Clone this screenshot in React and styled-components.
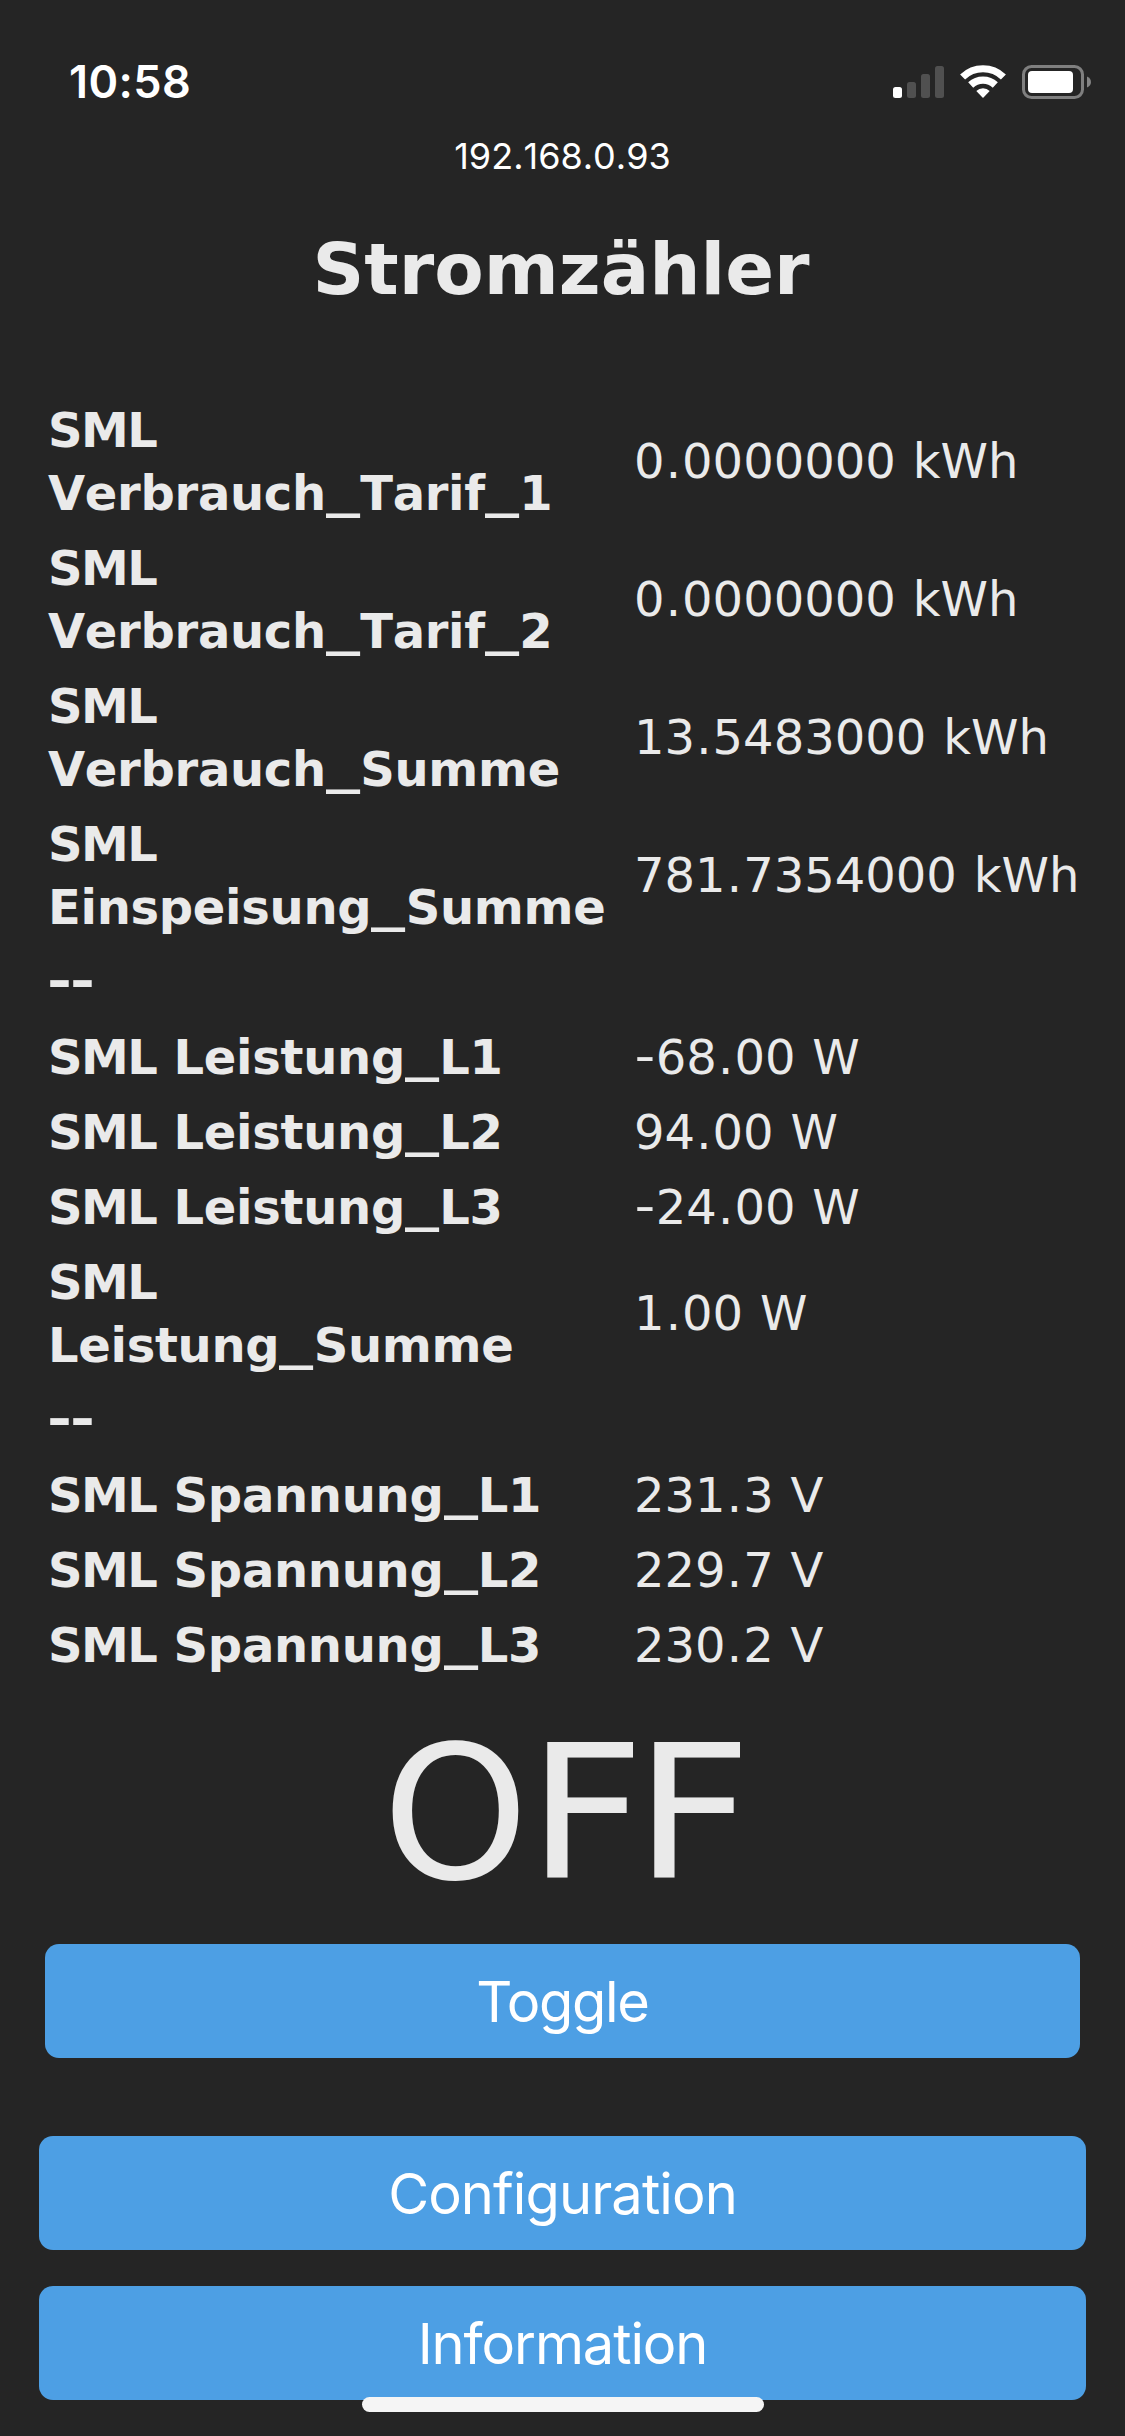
import { Fragment } from "react";
import styled, { createGlobalStyle } from "styled-components";

const GlobalStyle = createGlobalStyle`
  html,
  body {
    margin: 0;
    background: #252525;
  }

  * {
    box-sizing: border-box;
  }
`;

const Screen = styled.div`
  position: relative;
  width: 1125px;
  height: 2436px;
  overflow: hidden;
  background: #252525;
  color: #eaeaea;
  font-family: "DejaVu Sans", Verdana, sans-serif;
  font-size: 48px;
  font-kerning: none;
`;

const StatusBar = styled.header`
  display: flex;
  justify-content: space-between;
  align-items: center;
  height: 132px;
  padding: 32px 33px 0 69px;
  color: #fff;
`;

const Clock = styled.span`
  font-family: Inter, sans-serif;
  font-size: 45px;
  font-weight: 600;
  letter-spacing: 0.4px;
  line-height: 54px;
`;

const StatusIcons = styled.svg`
  display: block;
  width: 200px;
  height: 36px;
`;

const Address = styled.div`
  height: 92px;
  padding-top: 2px;
  color: #fff;
  font-family: Inter, sans-serif;
  font-size: 36px;
  line-height: 44px;
  text-align: center;
`;

const Title = styled.h2`
  height: 166px;
  margin: 0;
  padding-right: 3px;
  font-size: 72px;
  font-weight: bold;
  line-height: 90px;
  text-align: center;
`;

const ReadingTable = styled.table`
  width: 1047px;
  margin: 0 39px;
  border-spacing: 6px;
  table-layout: fixed;
  line-height: 63px;
`;

const Name = styled.th`
  width: 579px;
  padding: 3px;
  text-align: left;
  font-weight: bold;
  letter-spacing: -0.3px;
  word-spacing: 1px;
`;

const Value = styled.td`
  padding: 3px 3px ${({ $raised }) => ($raised ? 5 : 3)}px 4px;
  white-space: nowrap;
  word-spacing: 1.6px;
`;

const Prefix = styled.span`
  letter-spacing: -1.6px;
`;

// punctuation is set wider and higher than the font gives it
const Mark = styled.span`
  display: inline-block;
  width: ${({ $width }) => $width}px;
  letter-spacing: 0;
  text-align: center;
  transform: translateY(${({ $rise }) => -($rise || 0)}px)
    scaleX(${({ $stretch }) => $stretch || 1});
`;

const PowerState = styled.div`
  height: 258px;
  padding-top: 20px;
  font-size: 186px;
  line-height: 216px;
  text-align: center;
`;

const WideLetter = styled.span`
  display: inline-block;
  transform: scaleX(1.1);
  transform-origin: 18px 50%;
`;

const Actions = styled.div`
  display: flex;
  flex-direction: column;
  gap: ${({ $gap }) => $gap || 0}px;
  padding: 0 ${({ $inset }) => $inset}px;
  margin-bottom: 78px;
`;

const Button = styled.button`
  height: 114px;
  padding: 2px 0 0;
  border: 0;
  border-radius: 14px;
  background: #4d9fe4;
  color: #fff;
  font-family: Inter, sans-serif;
  font-size: 56px;
  font-weight: 400;
  font-kerning: normal;
  letter-spacing: ${({ $tracking }) => $tracking || 0}px;
  line-height: 112px;
  text-align: center;
  cursor: pointer;
`;

const HomeIndicator = styled.div`
  position: absolute;
  left: 362px;
  bottom: 24px;
  width: 402px;
  height: 15px;
  border-radius: 8px;
  background: #f5f5f5;
`;

const readings = [
  { name: "Verbrauch_Tarif_1", value: "0.0000000 kWh", wrap: true },
  { name: "Verbrauch_Tarif_2", value: "0.0000000 kWh", wrap: true },
  { name: "Verbrauch_Summe", value: "13.5483000 kWh", wrap: true },
  { name: "Einspeisung_Summe", value: "781.7354000 kWh", wrap: true },
  { separator: true },
  { name: "Leistung_L1", value: "-68.00 W" },
  { name: "Leistung_L2", value: "94.00 W" },
  { name: "Leistung_L3", value: "-24.00 W" },
  { name: "Leistung_Summe", value: "1.00 W", wrap: true },
  { separator: true },
  { name: "Spannung_L1", value: "231.3 V" },
  { name: "Spannung_L2", value: "229.7 V" },
  { name: "Spannung_L3", value: "230.2 V" },
];

const nameMarks = {
  _: { $width: 34.3, $stretch: 1.42, $rise: 3.5 },
  "-": { $width: 23, $stretch: 1.25, $rise: 2 },
};

const valueMarks = {
  ".": { $width: 17.5 },
  "-": { $width: 21.8, $stretch: 1.2, $rise: 2 },
};

const Spaced = ({ text, marks }) =>
  text
    .split(/([_.-])/)
    .filter(Boolean)
    .map((part, index) =>
      marks[part] ? (
        <Mark key={index} {...marks[part]}>{part}</Mark>
      ) : (
        <Fragment key={index}>{part}</Fragment>
      )
    );

const Reading = ({ reading }) => {
  if (reading.separator) {
    return (
      <tr>
        <Name><Spaced text="--" marks={nameMarks} /></Name>
        <Value />
      </tr>
    );
  }

  return (
    <tr>
      <Name>
        <Prefix>SML</Prefix>
        {reading.wrap ? <br /> : " "}
        <Spaced text={reading.name} marks={nameMarks} />
      </Name>
      <Value $raised={reading.wrap}>
        <Spaced text={reading.value} marks={valueMarks} />
      </Value>
    </tr>
  );
};

const Indicators = () => (
  <StatusIcons viewBox="0 0 200 36" fill="none">
    <rect x="1" y="23" width="9" height="11" rx="2.5" fill="#fff" />
    <g fill="#505050">
      <rect x="15" y="18" width="9" height="16" rx="2.5" />
      <rect x="29" y="10" width="9" height="24" rx="2.5" />
      <rect x="43" y="2" width="9" height="32" rx="2.5" />
    </g>
    <g stroke="#fff">
      <path d="M70.6 13A29.4 29.4 0 0 1 111.4 13" strokeWidth="7.2" />
      <path d="M78.7 21A18 18 0 0 1 103.3 21" strokeWidth="7.4" />
    </g>
    <path d="M91 34L84.3 27A9.8 9.8 0 0 1 97.7 27Z" fill="#fff" />
    <rect x="131.5" y="2.5" width="59" height="31" rx="8" stroke="#7f7f7f" strokeWidth="3" />
    <rect x="136" y="7" width="45" height="22" rx="4" fill="#fff" />
    <path d="M195 12.5C200.3 14.5 200.3 21.5 195 23.5Z" fill="#858585" />
  </StatusIcons>
);

const App = () => {
  return (
    <>
      <GlobalStyle />
      <Screen>
        <StatusBar>
          <Clock>10:58</Clock>
          <Indicators />
        </StatusBar>
        <Address>192.168.0.93</Address>
        <Title>Stromzähler</Title>
        <ReadingTable>
          <tbody>
            {readings.map((reading, index) => (
              <Reading key={index} reading={reading} />
            ))}
          </tbody>
        </ReadingTable>
        <PowerState>
          O<WideLetter>F</WideLetter><WideLetter>F</WideLetter>
        </PowerState>
        <Actions $inset={45}>
          <Button $tracking={-1.3}>Toggle</Button>
        </Actions>
        <Actions $inset={39} $gap={36}>
          <Button $tracking={-0.9}>Configuration</Button>
          <Button $tracking={-1.1}>Information</Button>
        </Actions>
        <HomeIndicator />
      </Screen>
    </>
  );
};

export default App;
